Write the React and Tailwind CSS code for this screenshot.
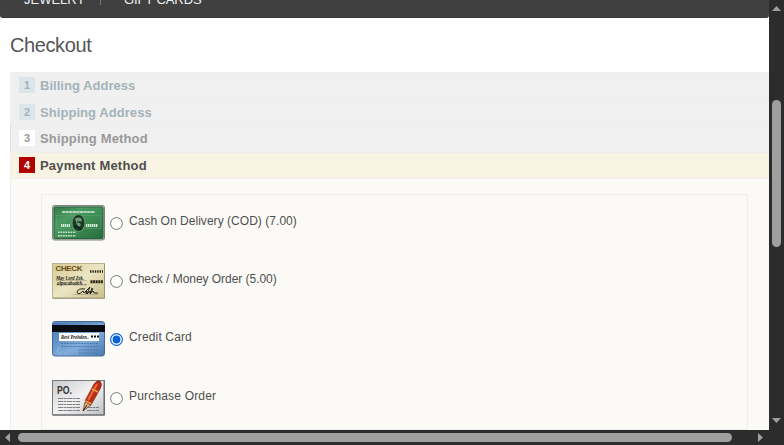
import React from "react";

const SANS = "font-['Liberation_Sans',Arial,sans-serif]";

function GreenCard() {
  return (
    <svg width="53" height="36" viewBox="0 0 53 36" className="block">
      <defs>
        <linearGradient id="green" x1="0" y1="0" x2="1" y2="1">
          <stop offset="0" stopColor="#327648" />
          <stop offset=".3" stopColor="#4b9b60" />
          <stop offset=".6" stopColor="#3b8a52" />
          <stop offset="1" stopColor="#286b3e" />
        </linearGradient>
      </defs>
      <rect x=".5" y=".5" width="52" height="34.5" rx="2" fill="#b4bab3" stroke="#7d837c" />
      <rect x="2" y="2" width="49" height="31.5" rx="1" fill="url(#green)" stroke="#28643c" />
      <rect x="4.5" y="10.5" width="44" height="13" fill="none" stroke="#68a77b" strokeWidth=".7" opacity=".6" />
      <path d="M10 7H43" stroke="#d9eadd" strokeWidth="1.5" strokeDasharray="3.2 .4" />
      <ellipse cx="26.5" cy="18" rx="6.5" ry="8.5" fill="#1c3a26" stroke="#6fae82" strokeWidth=".8" />
      <path d="M23 14Q26 10 29 13L30 16L27 17L29 20L27 22L25 20L24 17Z" fill="#6c9a78" />
      <path d="M22 22Q26 20 29 25M24 12L29 12M25 17H28" fill="none" stroke="#0b1c10" strokeWidth="1.2" />
      <path d="M9 20.5H18M34 20.5H46" stroke="#d6ecdb" strokeWidth="2.8" strokeDasharray="1.4 .6" />
      <path d="M6 27.3H24M6 30.8H24" stroke="#cde4d2" strokeWidth="1.6" strokeDasharray="1.7 .8" />
    </svg>
  );
}

function CheckCard() {
  return (
    <svg width="53" height="36" viewBox="0 0 53 36" className="block">
      <defs>
        <linearGradient id="cheque" x1="0" y1="0" x2="1" y2="1">
          <stop offset="0" stopColor="#d6ca93" />
          <stop offset=".5" stopColor="#ece5c3" />
          <stop offset="1" stopColor="#c9bf8c" />
        </linearGradient>
      </defs>
      <rect x=".5" y=".5" width="52" height="34.5" fill="url(#cheque)" stroke="#bcb491" />
      <path d="M1 35.3H52.5V1" fill="none" stroke="#9a9479" />
      <text x="3.5" y="8.3" fontSize="8" fontWeight="bold" fill="#694811" textLength="27" className="font-['Liberation_Sans',Arial,sans-serif]">CHECK</text>
      <path d="M38 8.5H51" stroke="#292516" strokeWidth="2.5" strokeDasharray="1.4 1" />
      <path d="M4 17.5H35M4 22H34M21 31.5H46" stroke="#a29b76" strokeWidth=".6" />
      <text x="4" y="17" fontSize="6.5" fontStyle="italic" fontWeight="bold" fill="#171711" textLength="28" lengthAdjust="spacingAndGlyphs" className="font-['Liberation_Serif',serif]">May Lord Zek.</text>
      <text x="5" y="21.5" fontSize="6" fontStyle="italic" fontWeight="bold" fill="#171711" textLength="30" lengthAdjust="spacingAndGlyphs" className="font-['Liberation_Serif',serif]">alpacabadeh. ..</text>
      <path d="M38.5 18.8H51" stroke="#292516" strokeWidth="3" strokeDasharray="2 .6" />
      <path d="M33 26Q26 25 25 29Q26 33 31 28L32 30L35 28L34 31M33 29L38 24L35 31L38 28L38 30Q42 26 40 25L38 31L41 28L42 30L46 30" fill="none" stroke="#171711" strokeWidth=".9" />
    </svg>
  );
}

function BlueCard() {
  return (
    <svg width="53" height="36" viewBox="0 0 53 36" className="block">
      <defs>
        <linearGradient id="blue" x1="0" y1="0" x2="1" y2="1">
          <stop offset="0" stopColor="#3d76b5" />
          <stop offset=".6" stopColor="#82add9" />
          <stop offset="1" stopColor="#4678b0" />
        </linearGradient>
      </defs>
      <rect x=".5" y=".5" width="52" height="34.5" rx="2.5" fill="url(#blue)" stroke="#466b98" />
      <path d="M2 1.5H51" stroke="#658fba" />
      <rect y="4" width="53" height="7" fill="#080b12" />
      <rect x="7" y="12" width="40" height="8" fill="#fff" />
      <text x="9" y="18" fontSize="7" fontStyle="italic" fontWeight="bold" fill="#101318" textLength="28" lengthAdjust="spacingAndGlyphs" className="font-['Liberation_Serif',serif]">Revi Prohden..</text>
      <path d="M39 15.5H47" stroke="#101318" strokeWidth="2" strokeDasharray="2 1" />
      <path d="M9 22.5H46M9 25.5H46M27 29H46M27 32H46" stroke="#3d6b9f" strokeWidth="1" strokeDasharray="2 .9" opacity=".7" />
      <path d="M5.5 28V32H9M9 27H6" fill="none" stroke="#8eb9e4" />
    </svg>
  );
}

function OrderCard() {
  return (
    <svg width="53" height="37" viewBox="0 0 53 37" className="block">
      <defs>
        <linearGradient id="paper" x1="0" y1="0" x2="1" y2="1">
          <stop offset="0" stopColor="#c8cbcf" />
          <stop offset=".5" stopColor="#f2f2f2" />
          <stop offset="1" stopColor="#bdbfc2" />
        </linearGradient>
      </defs>
      <rect x=".5" y="1.5" width="52" height="34.5" fill="url(#paper)" stroke="#77797c" />
      <path d="M1 36H52V2" fill="none" stroke="#606266" />
      <text x="5" y="14.8" fontSize="11.5" fontWeight="bold" fill="#333" textLength="15" lengthAdjust="spacingAndGlyphs" className="font-['Liberation_Sans',Arial,sans-serif]">PO.</text>
      <path d="M6 19.5H28M6 22.5H28M6 25.5H28M6 28.5H28M6 31.5H28M35 28.5H47M35 31.5H47" stroke="#737579" strokeWidth=".9" strokeDasharray="5 .5 3 .5" />
      <path d="M31 32L33 23L39 26Z" fill="#e2b27d" stroke="#593019" strokeWidth=".7" />
      <path d="M33 22L42 5Q45 1 48 2Q51 5 48 10L39 26Z" fill="#bd2c16" stroke="#7c2113" strokeWidth=".7" />
      <path d="M36 21L45 5" stroke="#ee6c3b" strokeWidth="2" />
      <path d="M33.5 22L39.5 25M40 10L46 13" stroke="#e7a33d" strokeWidth="1.5" />
      <path d="M31 32L35 26" stroke="#222" />
    </svg>
  );
}

const steps = [
  { n: 1, title: "Billing Address", row: "h-[27px] bg-[#f0f0f0] border-l-[#eeeeee]", text: "text-[#a4b3b9] tracking-[0.03px]", badge: "bg-[#dae6ea] text-[#a4b3b9]" },
  { n: 2, title: "Shipping Address", row: "h-[26px] bg-[#f0f0f0] border-l-[#eeeeee]", text: "text-[#a4b3b9] tracking-[0.06px]", badge: "bg-[#dae6ea] text-[#a4b3b9]" },
  { n: 3, title: "Shipping Method", row: "h-[27px] bg-[#f0f0f0] border-l-[#dddde6]", text: "text-[#999999] tracking-[0.16px]", badge: "bg-white text-[#999999]" },
  { n: 4, title: "Payment Method", row: "h-[26px] bg-[#f9f3e3] border-l-[#eeeeee]", text: "text-[#4f4f4f] tracking-[0.2px]", badge: "bg-[#b10202] text-white" },
];

const methods = [
  { label: "Cash On Delivery (COD) (7.00)", Card: GreenCard, row: "h-[58px]", tracking: "mt-2 tracking-[0.04px]", dot: "mt-3" },
  { label: "Check / Money Order (5.00)", Card: CheckCard, row: "h-[58px]", tracking: "mt-2 tracking-[-0.04px]", dot: "mt-3" },
  { label: "Credit Card", Card: BlueCard, row: "h-[58px]", tracking: "mt-2 tracking-[0.14px]", dot: "mt-3", checked: true },
  { label: "Purchase Order", Card: OrderCard, row: "h-[59px]", tracking: "mt-[9px] tracking-[0.18px]", dot: "mt-[13px]" },
];

function Radio({ checked, className }) {
  return (
    <svg width="13" height="13" viewBox="0 0 13 13" className={`ml-[5px] shrink-0 ${className}`}>
      <circle cx="6.5" cy="6.5" r="5.9" fill="#fff" stroke={checked ? "#0764d8" : "#777777"} strokeWidth={checked ? 1.2 : 1} />
      {checked && <circle cx="6.5" cy="6.5" r="3.9" fill="#0764d8" />}
    </svg>
  );
}

export default function App() {
  return (
    <div className={`flex h-[445px] w-[784px] flex-col overflow-hidden bg-[#2c2c2c] ${SANS}`}>
      <div className="flex h-[430px]">
        <main className="flex h-[430px] w-[769px] flex-col overflow-hidden bg-white">
          <nav className="flex h-[18px] shrink-0 items-start rounded-b-[3px] border-b border-[#383838] bg-[#404040] pl-6 text-[13px] leading-[16px] text-[#f0f0f0]">
            <span className="-mt-2 w-[61px]">JEWELRY</span>
            <span className="ml-[15px] h-[5px] w-px bg-[#777777]" />
            <span className="-mt-2 ml-[23px] tracking-[-0.1px]">GIFT CARDS</span>
          </nav>
          <h1 className="h-[54px] shrink-0 pt-[15px] pl-[10px] text-[20px] leading-6 tracking-[-0.4px] text-[#555555]">Checkout</h1>
          <div className="ml-[10px] flex flex-1 flex-col">
            {steps.map((s) => (
              <div key={s.n} className={`flex shrink-0 items-start border-t border-l border-t-[#eeeeee] pt-1 pl-2 ${s.row}`}>
                <span className={`flex size-4 items-center justify-center text-[11px] leading-4 font-bold ${s.badge}`}>{s.n}</span>
                <h2 className={`mt-px ml-[5px] text-[13px] leading-4 font-bold ${s.text}`}>{s.title}</h2>
              </div>
            ))}
            <section className="flex-1 border-t border-l border-[#eeeeee] bg-[#fbfaf6] pt-[15px] pr-[21px] pl-[30px]">
              <div className="h-[236px] border border-[#eeeeee] pt-[10px] pl-[10px]">
                {methods.map(({ label, Card, row, tracking, dot, checked }) => (
                  <div key={label} className={`flex items-start ${row}`}>
                    <Card />
                    <Radio checked={checked} className={dot} />
                    <span className={`ml-[6px] text-[12px] leading-4 whitespace-nowrap text-[#4f4f4f] ${tracking}`}>{label}</span>
                  </div>
                ))}
              </div>
            </section>
          </div>
        </main>
        <aside className="flex h-[430px] w-[15px] flex-col items-center bg-[#2c2c2c]">
          <svg width="9" height="5" viewBox="0 0 9 5" className="mt-[6px] block"><path d="M4.5 0L9 5H0Z" fill="#9f9f9f" /></svg>
          <div className="mt-[89px] h-[147px] w-[9px] rounded-full bg-[#9f9f9f]" />
          <svg width="9" height="5" viewBox="0 0 9 5" className="mt-[171px] block"><path d="M0 0H9L4.5 5Z" fill="#9f9f9f" /></svg>
        </aside>
      </div>
      <div className="flex h-[15px] w-[769px] items-center bg-[#2c2c2c]">
        <svg width="5" height="9" viewBox="0 0 5 9" className="ml-[5px] block"><path d="M5 0V9L0 4.5Z" fill="#9f9f9f" /></svg>
        <div className="ml-2 h-[9px] w-[714px] rounded-full bg-[#9f9f9f]" />
        <svg width="5" height="9" viewBox="0 0 5 9" className="ml-[26px] block"><path d="M0 0L5 4.5L0 9Z" fill="#9f9f9f" /></svg>
      </div>
    </div>
  );
}
